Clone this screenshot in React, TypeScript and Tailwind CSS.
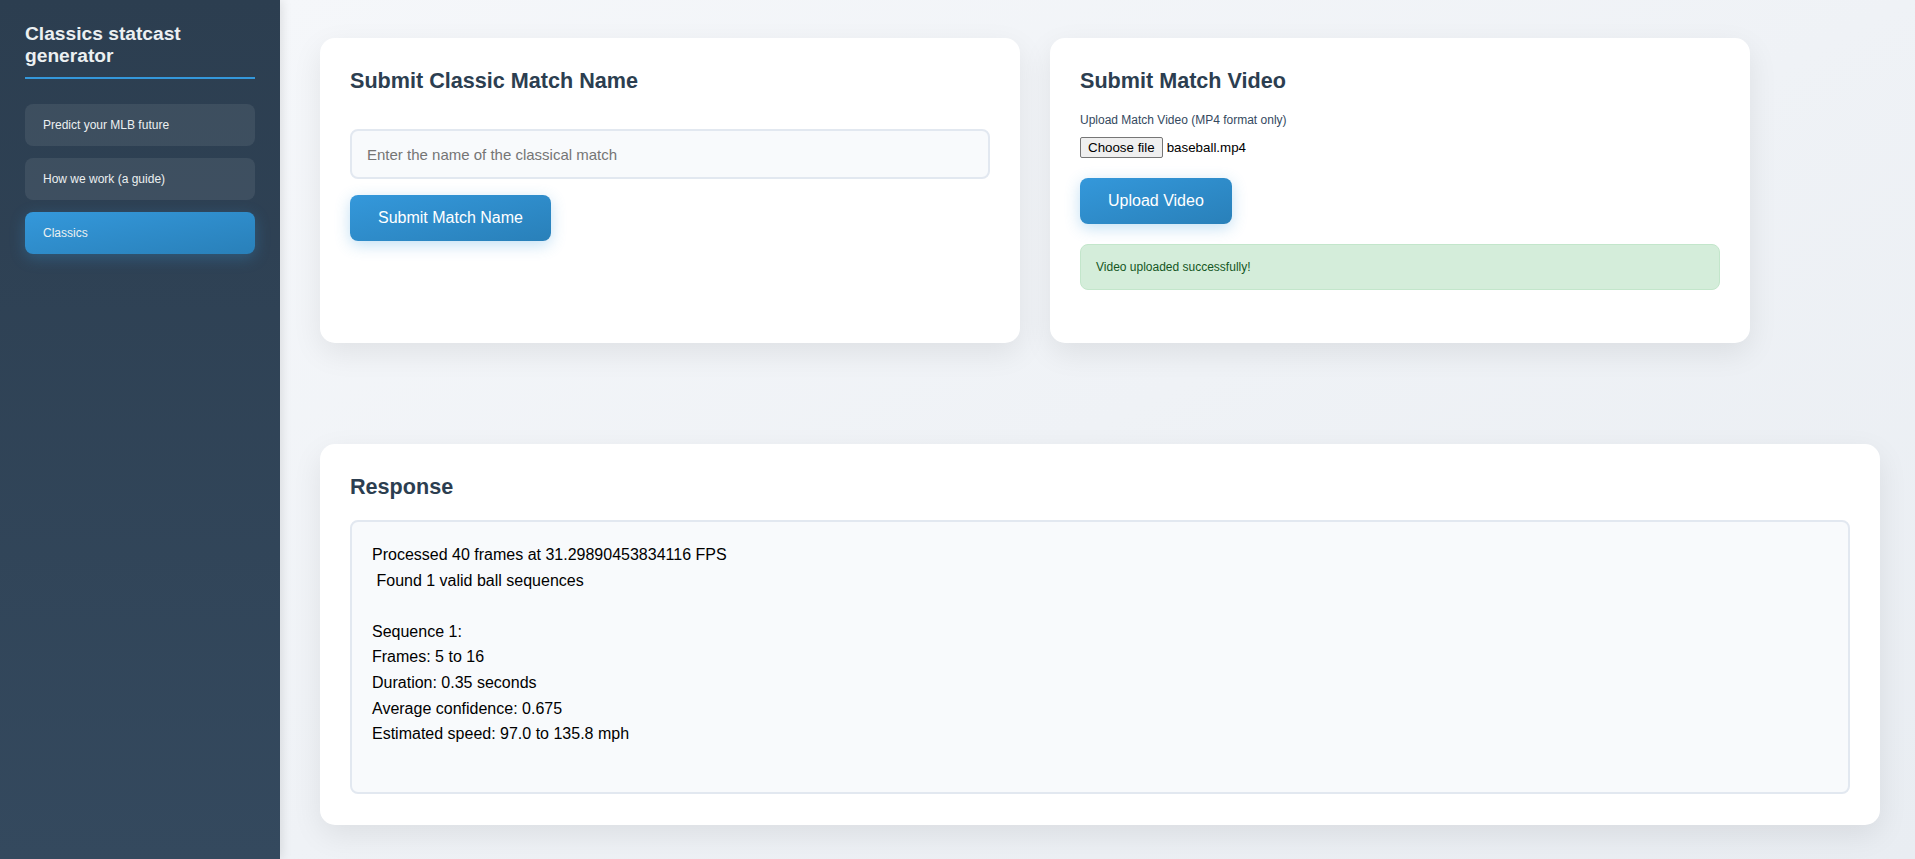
import React, { useState } from 'react';

const navItems = [
  { id: 'predict', label: 'Predict your MLB future' },
  { id: 'guide', label: 'How we work (a guide)' },
  { id: 'classics', label: 'Classics' },
];

const responseText = `Processed 40 frames at 31.29890453834116 FPS
 Found 1 valid ball sequences

Sequence 1:
Frames: 5 to 16
Duration: 0.35 seconds
Average confidence: 0.675
Estimated speed: 97.0 to 135.8 mph
`;

const btnClass =
  'rounded-[8px] bg-gradient-to-br from-[#3498db] to-[#2980b9] px-[28px] py-[14px] text-[16px] leading-[18px] text-white shadow-[0_4px_15px_rgba(52,152,219,0.3)]';

const App: React.FC = () => {
  const [active, setActive] = useState('classics');
  const [matchName, setMatchName] = useState('');

  return (
    <div className="flex h-screen overflow-hidden font-['Liberation_Sans',Arial,sans-serif]">
      {/* Sidebar */}
      <aside className="z-10 flex w-[280px] shrink-0 flex-col bg-gradient-to-b from-[#2c3e50] to-[#34495e] px-[25px] pt-[23px] shadow-[2px_0_10px_rgba(0,0,0,0.1)]">
        <h1 className="border-b-2 border-[#3498db] pb-[10px] text-[19.2px] font-bold leading-[1.15] text-[#ecf0f1]">
          Classics statcast generator
        </h1>
        <nav className="mt-[25px] flex flex-col gap-[12px]">
          {navItems.map((item) => (
            <button
              key={item.id}
              onClick={() => setActive(item.id)}
              className={
                active === item.id
                  ? 'rounded-[8px] bg-gradient-to-br from-[#3498db] to-[#2980b9] px-[18px] py-[14px] text-left text-[12px] leading-[14px] text-[#ecf0f1] shadow-[0_4px_15px_rgba(52,152,219,0.3)]'
                  : 'rounded-[8px] bg-white/[0.08] px-[18px] py-[14px] text-left text-[12px] leading-[14px] text-[#ecf0f1]'
              }
            >
              {item.label}
            </button>
          ))}
        </nav>
      </aside>

      {/* Main */}
      <main className="flex-1 bg-gradient-to-br from-[#f5f7fa] to-[#e9edf2] pb-[34px] pl-[40px] pr-[35px] pt-[38px]">
        <div className="flex gap-[30px]">
          <section className="h-[305px] w-[700px] rounded-[15px] bg-white p-[30px] shadow-[0_10px_30px_rgba(0,0,0,0.08)]">
            <h2 className="text-[21.6px] font-bold leading-[25px] text-[#2c3e50]">Submit Classic Match Name</h2>
            <input
              value={matchName}
              onChange={(e) => setMatchName(e.target.value)}
              placeholder="Enter the name of the classical match"
              className="mt-[36px] block h-[50px] w-full rounded-[8px] border-2 border-[#e2e8f0] bg-[#f8fafc] px-[15px] text-[15px] text-[#2c3e50] outline-none placeholder:text-[#757575]"
            />
            <button className={`mt-[16px] ${btnClass}`}>Submit Match Name</button>
          </section>

          <section className="h-[305px] w-[700px] rounded-[15px] bg-white p-[30px] shadow-[0_10px_30px_rgba(0,0,0,0.08)]">
            <h2 className="text-[21.6px] font-bold leading-[25px] text-[#2c3e50]">Submit Match Video</h2>
            <label className="mt-[20px] block text-[12px] leading-[14px] text-[#34495e]">
              Upload Match Video (MP4 format only)
            </label>
            <div className="mt-[10px] flex items-center gap-[4px] text-[13.33px] font-normal text-black">
              <span className="rounded-[2px] border border-[#767676] bg-[#efefef] px-[7px] py-[2px] leading-[15px]">
                Choose file
              </span>
              <span className="font-normal">baseball.mp4</span>
            </div>
            <button className={`mt-[20px] ${btnClass}`}>Upload Video</button>
            <div className="mt-[20px] rounded-[8px] border border-[#c3e6cb] bg-[#d4edda] px-[15px] py-[15px] text-[12px] leading-[14px] text-[#155724]">
              Video uploaded successfully!
            </div>
          </section>
        </div>

        <section className="mt-[101px] h-[381px] w-full rounded-[15px] bg-white p-[30px] shadow-[0_10px_30px_rgba(0,0,0,0.08)]">
          <h2 className="text-[21.6px] font-bold leading-[25px] text-[#2c3e50]">Response</h2>
          <pre className="mt-[21px] h-[274px] whitespace-pre-wrap rounded-[8px] border-2 border-[#e2e8f0] bg-[#f8fafc] p-[20px] font-['Liberation_Sans',Arial,sans-serif] text-[16px] leading-[1.6] text-black">
            {responseText}
          </pre>
        </section>
      </main>
    </div>
  );
};

export default App;
